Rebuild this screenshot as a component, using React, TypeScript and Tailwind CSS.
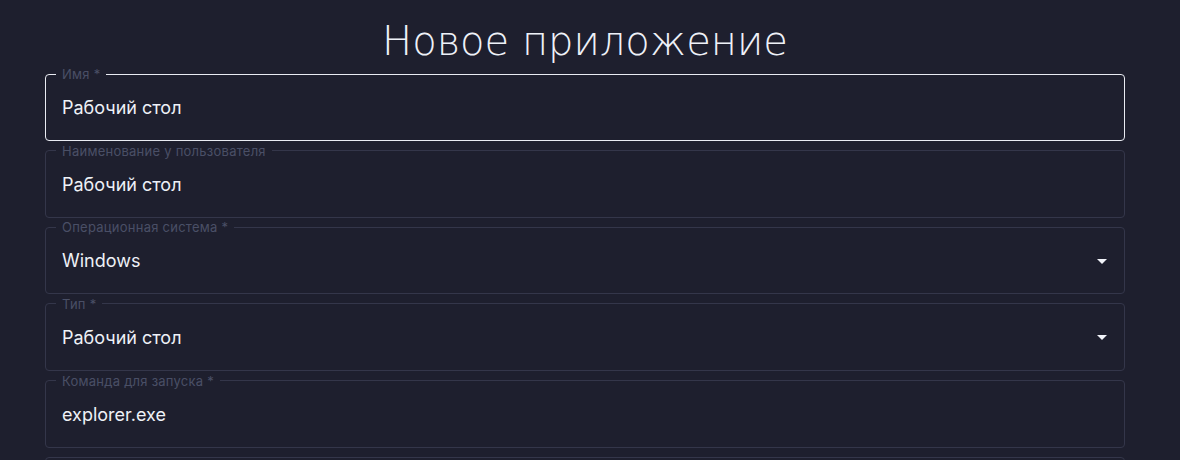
import React from "react";

type Field = { label: string; value: string; focused?: boolean; select?: boolean };

const fields: Field[] = [
  { label: "Имя *", value: "Рабочий стол", focused: true },
  { label: "Наименование у пользователя", value: "Рабочий стол" },
  { label: "Операционная система *", value: "Windows", select: true },
  { label: "Тип *", value: "Рабочий стол", select: true },
  { label: "Команда для запуска *", value: "explorer.exe" },
  { label: "", value: "" },
];

function ArrowDropDown() {
  return (
    <svg width="24" height="24" viewBox="0 0 24 24" className="shrink-0">
      <path d="M7 10l5 5 5-5z" fill="#f2f4fa" />
    </svg>
  );
}

function OutlinedField({ f }: { f: Field }) {
  const border = f.focused ? "border-[#e9ebf2]" : "border-[#34364a]";
  return (
    <div className="relative h-[67px] shrink-0">
      {f.label ? (
        <fieldset
          className={`absolute inset-x-0 top-[-7px] bottom-0 rounded-[4px] border px-[10px] m-0 ${border}`}
        >
          <legend className="px-[6px] text-[13px] leading-[14px] text-[#4a4f66] font-['Inter',sans-serif] tracking-[0.25px]">
            {f.label}
          </legend>
        </fieldset>
      ) : (
        <div className={`absolute inset-0 rounded-[4px] border ${border}`} />
      )}
      <div className="absolute inset-0 flex items-center pl-[17px] pr-[11px]">
        <span className="flex-1 text-[18px] text-[#eef1f7] font-['Inter',sans-serif]">{f.value}</span>
        {f.select && <ArrowDropDown />}
      </div>
    </div>
  );
}

export default function App() {
  return (
    <div className="w-[1180px] h-[460px] overflow-hidden bg-[#1e1f2e]">
      <div className="ml-[45px] w-[1080px] flex flex-col">
        <h1 className="text-center text-[40px] leading-[48px] pt-[17px] text-[#eef1f8] font-['DejaVu_Sans',sans-serif] font-light">
          Новое приложение
        </h1>
        <div className="flex flex-col gap-[9.67px] pt-[9px]">
          {fields.map((f, i) => (
            <OutlinedField key={i} f={f} />
          ))}
        </div>
      </div>
    </div>
  );
}
